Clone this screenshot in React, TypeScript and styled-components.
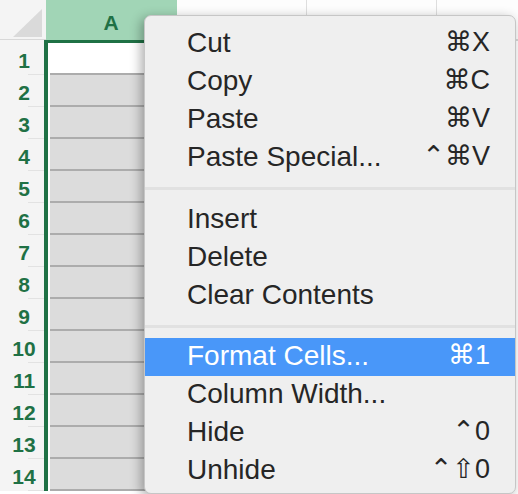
import React from "react"
import styled, { createGlobalStyle } from "styled-components"

const GlobalStyle = createGlobalStyle`
  html, body {
    margin: 0;
    padding: 0;
    background: #fff;
    overflow: hidden;
  }
  body {
    font-family: "Liberation Sans", "DejaVu Sans", sans-serif;
  }
`

const excelGreen = "#1f7145"

const Window = styled.div`
  position: relative;
  width: 518px;
  height: 494px;
  overflow: hidden;
  background: #fff;
`

const HeaderRow = styled.div`
  display: flex;
  height: 40px;
`

const Corner = styled.div`
  flex: none;
  width: 46px;
  box-sizing: border-box;
  display: flex;
  align-items: flex-end;
  justify-content: flex-end;
  padding: 0 4px 2px 0;
  background: #f4f4f4;
  border-bottom: 1px solid #d8d8d8;
`

const CornerTriangle = styled.div`
  width: 29px;
  height: 28px;
  background: #dadada;
  clip-path: polygon(100% 0, 100% 100%, 0 100%);
`

const ColHeader = styled.div<{ $selected?: boolean; $width: number }>`
  flex: none;
  width: ${(p) => p.$width}px;
  box-sizing: border-box;
  display: flex;
  justify-content: center;
  padding-top: 12px;
  font-size: 21px;
  line-height: 1;
  font-weight: ${(p) => (p.$selected ? "bold" : "normal")};
  color: ${(p) => (p.$selected ? excelGreen : "#444")};
  background: ${(p) => (p.$selected ? "#a1d5b6" : "#fdfdfd")};
  border-right: 1px solid ${(p) => (p.$selected ? "#a1d5b6" : "#dedede")};
  border-bottom: 1px solid ${(p) => (p.$selected ? "#a1d5b6" : "#d8d8d8")};
`

const Body = styled.div`
  display: flex;
`

const RowHeaders = styled.div`
  flex: none;
  width: 44px;
  padding-top: 3px;
  background: #f4f4f4;
`

const RowLabel = styled.div`
  position: relative;
  height: 32px;
  box-sizing: border-box;
  display: flex;
  align-items: center;
  justify-content: center;
  padding: 4px 0 0 4px;
  font-size: 21px;
  font-weight: bold;
  color: ${excelGreen};

  &::after {
    content: "";
    position: absolute;
    right: 0;
    bottom: 0;
    width: 16px;
    height: 1px;
    background: #e2e2e2;
  }
`

const SelectedColumn = styled.div`
  flex: none;
  width: 133px;
  box-sizing: border-box;
  padding-left: 2px;
  background: #fff;
  border-left: 4px solid ${excelGreen};
  border-top: 3px solid ${excelGreen};
`

const Cell = styled.div<{ $active?: boolean }>`
  height: 32px;
  box-sizing: border-box;
  background: ${(p) => (p.$active ? "#fff" : "#dcdcdc")};
  border-bottom: 2px solid #acacac;
`

const OtherColumns = styled.div`
  flex: 1;
  background: #fff;
  border-top: 1px solid #d8d8d8;
`

const Menu = styled.div`
  position: absolute;
  left: 144px;
  top: 15px;
  width: 372px;
  box-sizing: border-box;
  padding: 9px 0 3px;
  background: #efefef;
  border: 1px solid #c6c6c6;
  border-radius: 7px;
  box-shadow: -3px 3px 12px rgba(0, 0, 0, 0.32);
`

const MenuItem = styled.div<{ $highlighted?: boolean }>`
  height: 38px;
  box-sizing: border-box;
  display: flex;
  justify-content: space-between;
  padding: 0 25px 0 42px;
  font-size: 28px;
  line-height: 35px;
  color: ${(p) => (p.$highlighted ? "#fff" : "#262626")};
  background: ${(p) => (p.$highlighted ? "#4997f9" : "transparent")};
`

const Shortcut = styled.span`
  font-size: 27px;
`

const Separator = styled.div`
  height: 23.5px;
  display: flex;
  align-items: center;

  &::before {
    content: "";
    flex: 1;
    height: 3px;
    background: #e1e1e1;
  }
`

type Item = { label: string; shortcut?: string; highlighted?: boolean }

const groups: Item[][] = [
  [
    { label: "Cut", shortcut: "⌘X" },
    { label: "Copy", shortcut: "⌘C" },
    { label: "Paste", shortcut: "⌘V" },
    { label: "Paste Special...", shortcut: "⌃⌘V" },
  ],
  [{ label: "Insert" }, { label: "Delete" }, { label: "Clear Contents" }],
  [
    { label: "Format Cells...", shortcut: "⌘1", highlighted: true },
    { label: "Column Width..." },
    { label: "Hide", shortcut: "⌃0" },
    { label: "Unhide", shortcut: "⌃⇧0" },
  ],
]

const rows = Array.from({ length: 14 }, (_, i) => i + 1)

export default function App() {
  return (
    <Window>
      <GlobalStyle />
      <HeaderRow>
        <Corner>
          <CornerTriangle />
        </Corner>
        <ColHeader $selected $width={131}>A</ColHeader>
        <ColHeader $width={130}>B</ColHeader>
        <ColHeader $width={130}>C</ColHeader>
        <ColHeader $width={130}>D</ColHeader>
      </HeaderRow>
      <Body>
        <RowHeaders>
          {rows.map((n) => (
            <RowLabel key={n}>{n}</RowLabel>
          ))}
        </RowHeaders>
        <SelectedColumn>
          {rows.map((n) => (
            <Cell key={n} $active={n === 1} />
          ))}
        </SelectedColumn>
        <OtherColumns />
      </Body>

      <Menu>
        {groups.map((group, gi) => (
          <React.Fragment key={gi}>
            {gi > 0 && <Separator />}
            {group.map((item) => (
              <MenuItem key={item.label} $highlighted={item.highlighted}>
                <span>{item.label}</span>
                {item.shortcut && <Shortcut>{item.shortcut}</Shortcut>}
              </MenuItem>
            ))}
          </React.Fragment>
        ))}
      </Menu>
    </Window>
  )
}
